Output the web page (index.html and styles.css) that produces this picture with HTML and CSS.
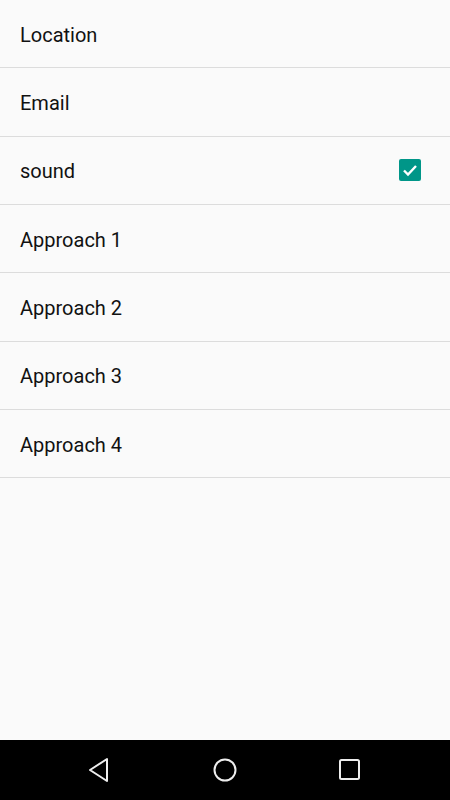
FILE: index.html
```html
<!DOCTYPE html>
<html lang="en">
<head>
    <meta charset="UTF-8">
    <meta name="viewport" content="width=device-width, initial-scale=1.0">
    <title>Settings</title>
    <link rel="stylesheet" href="styles.css">
</head>
<body>

    <div class="screen">
        <ul class="prefs">
            <li class="pref">Location</li>
            <li class="pref">Email</li>
            <li class="pref">
                <span>sound</span>
                <span class="checkbox">
                    <svg width="22" height="22" viewBox="0 0 22 22">
                        <path d="M5 11.5l4 4 8-8.5" fill="none" stroke="#fff" stroke-width="2.4"/>
                    </svg>
                </span>
            </li>
            <li class="pref">Approach 1</li>
            <li class="pref">Approach 2</li>
            <li class="pref">Approach 3</li>
            <li class="pref">Approach 4</li>
        </ul>

        <div class="navbar">
            <svg width="24" height="28" viewBox="0 0 24 28">
                <path d="M20 3v22L3 14z" fill="none" stroke="#eee" stroke-width="2" stroke-linejoin="round"/>
            </svg>
            <svg width="26" height="26" viewBox="0 0 26 26">
                <circle cx="13" cy="13" r="10.5" fill="none" stroke="#eee" stroke-width="2"/>
            </svg>
            <svg width="24" height="24" viewBox="0 0 24 24">
                <rect x="2" y="2" width="19" height="19" rx="1.5" fill="none" stroke="#eee" stroke-width="2"/>
            </svg>
        </div>
    </div>

</body>
</html>
```

FILE: styles.css
```css
body {
    margin: 0;
    font-family: Roboto, "Noto Sans", sans-serif;
    background-color: #fafafa;
}

.screen {
    display: flex;
    flex-direction: column;
    height: 800px;
}

.prefs {
    list-style: none;
    margin: 0;
    padding: 0;
    flex: 1;
}

.pref {
    display: flex;
    align-items: center;
    justify-content: space-between;
    height: 67.33px;
    padding: 2px 29px 0 20px;
    box-sizing: border-box;
    height: 68.33px;
    border-bottom: 1px solid #dcdcdc;
    font-size: 20px;
    color: #111;
}

.checkbox {
    display: flex;
    width: 22px;
    height: 22px;
    margin-top: -2px;
    background-color: #009688;
    border-radius: 2px;
}

.navbar {
    height: 60px;
    background-color: #000;
    display: flex;
    align-items: center;
    justify-content: space-between;
    padding: 0 88px 0 87px;
}
```
